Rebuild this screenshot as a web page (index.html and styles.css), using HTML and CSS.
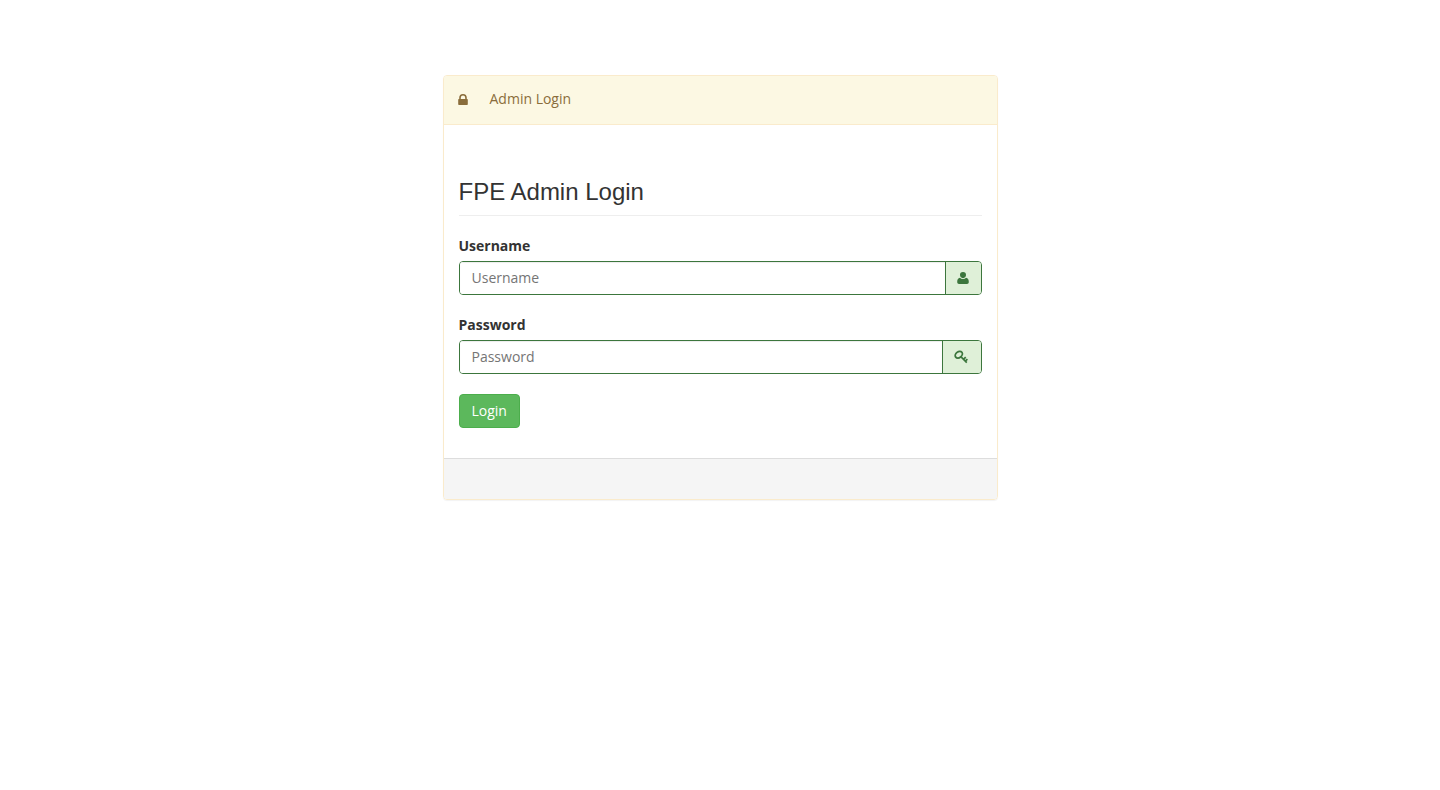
FILE: index.html
```html
<!DOCTYPE html>
<html lang="en">
<head>
<meta charset="utf-8">
<meta name="viewport" content="width=device-width, initial-scale=1">
<title>Admin Login</title>
<link rel="stylesheet" href="styles.css">
</head>
<body>
<main class="container">
  <section class="panel">
    <header class="panel-heading">
      <svg class="icon-lock" viewBox="0 0 10 14" aria-hidden="true"><path fill="currentColor" fill-rule="evenodd" d="M1.200 7V5.700a3.800 3.800 0 0 1 7.600 0V7h.3q.7 0 .7.700v4.500q0 .8-.8.8H1q-.8 0-.8-.8V7.700q0-.7.7-.7zM2.800 7h4.400V5.700a2.200 2.200 0 0 0-4.400 0z"/></svg>
      <span>Admin Login</span>
    </header>
    <form class="panel-body">
      <h1 class="title">FPE Admin Login</h1>
      <div class="form-group">
        <label for="username">Username</label>
        <div class="input-group">
          <input id="username" type="text" placeholder="Username">
          <span class="addon"><svg class="icon-user" viewBox="0 0 13 14" aria-hidden="true"><path fill="currentColor" d="M6 1a3 3 0 0 1 3 3.100C9 5.800 7.700 7.200 6 7.200S3 5.800 3 4.100A3 3 0 0 1 6 1zM3 6.800c.8.800 1.800 1.300 3 1.300s2.200-.5 3-1.300c1.900.3 2.800 1.700 2.800 4.200 0 1.200-.7 2-1.800 2H2c-1.100 0-1.800-.8-1.800-2 0-2.500.9-3.900 2.800-4.200z"/></svg></span>
        </div>
      </div>
      <div class="form-group">
        <label for="password">Password</label>
        <div class="input-group">
          <input id="password" type="password" placeholder="Password">
          <span class="addon"><svg class="icon-key" viewBox="0 0 16 14" aria-hidden="true"><g fill="none" stroke="currentColor" stroke-width="1.800"><ellipse cx="4.800" cy="4.700" rx="3.900" ry="2.900" transform="rotate(-38 4.800 4.700)"/><path d="M6.800 6.600l6 6M9.500 9.300l2.200-2.200M11.300 11.200l2.100-2.100" stroke-width="1.700"/></g></svg></span>
        </div>
      </div>
      <button class="btn" type="submit">Login</button>
    </form>
    <footer class="panel-footer"></footer>
  </section>
</main>
</body>
</html>
```
FILE: styles.css
```css
* {
  box-sizing: border-box;
}

body {
  margin: 0;
  background: #fff;
  color: #333;
  font-family: "Open Sans", "Liberation Sans", sans-serif;
  font-size: 14px;
  line-height: 20px;
}

.container {
  padding: 75px 15px 20px;
}

.panel {
  max-width: 555px;
  margin: 0 auto;
  border: 1px solid #faebcc;
  border-radius: 4px;
  box-shadow: 0 1px 1px rgba(0, 0, 0, 0.05);
  overflow: hidden;
}

.panel-heading {
  display: flex;
  align-items: center;
  gap: 22px;
  padding: 13px 14px 15px;
  background: #fcf8e3;
  border-bottom: 1px solid #faebcc;
  color: #8a6d3b;
}

.icon-lock {
  width: 10px;
  height: 14px;
}

.panel-body {
  padding: 50px 15px 30px;
}

.title {
  margin: 0 0 20px;
  padding: 4px 0 10px;
  border-bottom: 1px solid #eee;
  font-family: "Liberation Sans", Arial, sans-serif;
  font-size: 24px;
  font-weight: 400;
  line-height: 26px;
}

.form-group {
  margin-bottom: 20px;
}

label {
  display: block;
  margin-bottom: 5px;
  font-weight: 700;
}

.input-group {
  display: flex;
  height: 34px;
  border: 1px solid #3c763d;
  border-radius: 4px;
  overflow: hidden;
}

input {
  flex: 1;
  min-width: 0;
  padding: 0 12px;
  border: 0;
  background: #fff;
  box-shadow: inset 0 1px 1px rgba(0, 0, 0, 0.075);
  color: #555;
  font: inherit;
}

input::placeholder {
  color: #757575;
}

input:focus {
  outline: 0;
}

.input-group:focus-within {
  box-shadow: 0 0 6px #67b168;
}

.addon {
  display: flex;
  align-items: center;
  padding: 0 11px;
  border-left: 1px solid #3c763d;
  background: #dff0d8;
  color: #3c763d;
}

.icon-user {
  width: 13px;
  height: 14px;
}

.icon-key {
  width: 16px;
  height: 14px;
}

.btn {
  display: block;
  padding: 6px 12px;
  border: 1px solid #4cae4c;
  border-radius: 4px;
  background: #5cb85c;
  color: #fff;
  font: inherit;
  cursor: pointer;
}

.panel-footer {
  min-height: 41px;
  border-top: 1px solid #ddd;
  background: #f5f5f5;
}
```
